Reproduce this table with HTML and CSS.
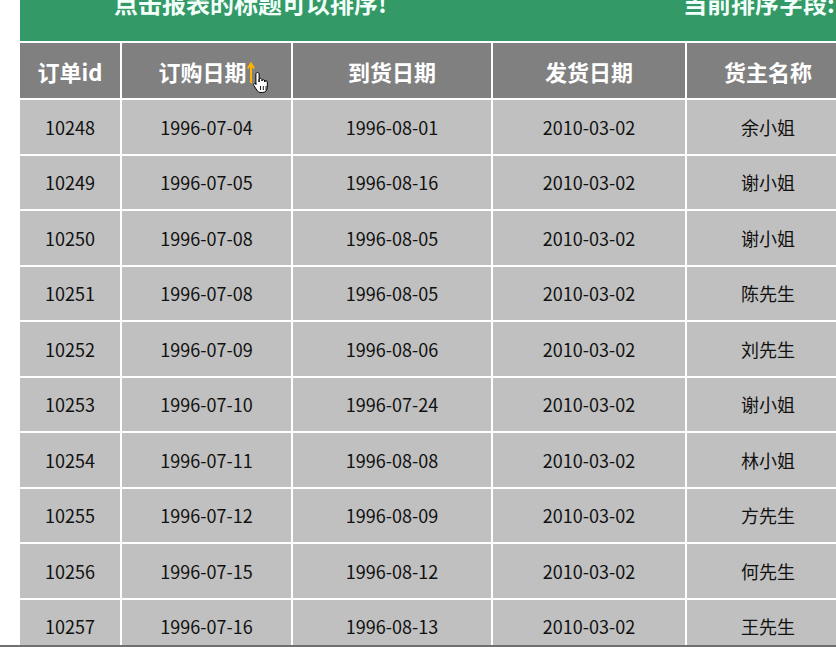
FILE: index.html
```html
<!DOCTYPE html>
<html lang="zh-CN">
<head>
<meta charset="utf-8">
<title>订单报表</title>
<link rel="stylesheet" href="styles.css">
</head>
<body>
<div class="banner">
  <span class="banner-title">点击报表的标题可以排序!</span>
  <span class="banner-field">当前排序字段:</span>
</div>
<table class="report">
  <colgroup>
    <col class="c1"><col class="c2"><col class="c3"><col class="c4"><col class="c5">
  </colgroup>
  <thead>
    <tr>
      <th>订单id</th>
      <th class="sorted">订购日期<svg class="arrow" width="8" height="22" viewBox="0 0 8 22"><path d="M4 21V2.5M0.8 6.5L4 1.5L7.2 6.5" fill="none" stroke="#ffb400" stroke-width="2"/></svg><svg class="cursor" width="16" height="24" viewBox="0 0 16 24"><path d="M4.5 1.5c1 0 1.6.7 1.6 1.6V11l0-2.2c0-.9.6-1.5 1.4-1.5s1.4.6 1.4 1.5v1.2c0-.9.6-1.4 1.4-1.4s1.4.6 1.4 1.4v1c0-.8.6-1.3 1.3-1.3.8 0 1.3.6 1.3 1.4v5.2c0 3-1.9 5.2-4.8 5.2H8c-2 0-3.2-.9-4.2-2.4L.9 14.6c-.5-.8-.3-1.6.4-2 .7-.4 1.4-.2 1.9.4l-.4-.4L2.9 13.5V3.1c0-.9.6-1.6 1.6-1.6z" fill="#fff" stroke="#000" stroke-width="1"/><path d="M7.5 15v4M10.3 15v4M13 15v4" stroke="#000" stroke-width="0.9"/></svg></th>
      <th>到货日期</th>
      <th>发货日期</th>
      <th>货主名称</th>
    </tr>
  </thead>
  <tbody>
    <tr><td>10248</td><td>1996-07-04</td><td>1996-08-01</td><td>2010-03-02</td><td>余小姐</td></tr>
    <tr><td>10249</td><td>1996-07-05</td><td>1996-08-16</td><td>2010-03-02</td><td>谢小姐</td></tr>
    <tr><td>10250</td><td>1996-07-08</td><td>1996-08-05</td><td>2010-03-02</td><td>谢小姐</td></tr>
    <tr><td>10251</td><td>1996-07-08</td><td>1996-08-05</td><td>2010-03-02</td><td>陈先生</td></tr>
    <tr><td>10252</td><td>1996-07-09</td><td>1996-08-06</td><td>2010-03-02</td><td>刘先生</td></tr>
    <tr><td>10253</td><td>1996-07-10</td><td>1996-07-24</td><td>2010-03-02</td><td>谢小姐</td></tr>
    <tr><td>10254</td><td>1996-07-11</td><td>1996-08-08</td><td>2010-03-02</td><td>林小姐</td></tr>
    <tr><td>10255</td><td>1996-07-12</td><td>1996-08-09</td><td>2010-03-02</td><td>方先生</td></tr>
    <tr><td>10256</td><td>1996-07-15</td><td>1996-08-12</td><td>2010-03-02</td><td>何先生</td></tr>
    <tr><td>10257</td><td>1996-07-16</td><td>1996-08-13</td><td>2010-03-02</td><td>王先生</td></tr>
  </tbody>
</table>
<div class="hscroll"></div>
</body>
</html>
```

FILE: styles.css
```css
html, body {
  margin: 0;
  padding: 0;
  background: #fff;
  overflow: hidden;
  height: 647px;
}
body {
  font-family: "Noto Sans CJK SC", "Noto Sans", sans-serif;
  width: 836px;
}
.banner {
  margin-left: 20px;
  width: 1000px;
  height: 41px;
  background: #339966;
  color: #f2fffa;
  font-weight: bold;
  font-size: 24px;
  line-height: 24px;
  display: flex;
  overflow: hidden;
}
.banner-title {
  margin-left: 94px;
  width: 569px;
  margin-top: -9px;
}
.banner-field {
  margin-top: -9px;
  white-space: nowrap;
}
.report {
  margin-left: 18px;
  border-collapse: separate;
  border-spacing: 2px;
  table-layout: fixed;
  width: 833px;
}
.c1 { width: 100px; }
.c2 { width: 169px; }
.c3 { width: 198px; }
.c4 { width: 192px; }
.c5 { width: 162px; }
.report th, .report td {
  padding: 0;
  text-align: center;
  vertical-align: middle;
}
.report th {
  background: #808080;
  color: #fff;
  font-size: 22px;
  font-weight: bold;
  height: 55px;
  padding-top: 1px;
  box-sizing: border-box;
}
.report td {
  background: #c0c0c0;
  color: #111;
  font-size: 18px;
  height: 53.5px;
}
.sorted {
  position: relative;
}
.arrow {
  vertical-align: -3px;
  margin-left: 0;
}
.cursor {
  position: absolute;
  left: 131px;
  top: 28px;
}
.hscroll {
  position: fixed;
  left: 0;
  right: 0;
  bottom: 0;
  height: 2px;
  background: #707070;
}
```
